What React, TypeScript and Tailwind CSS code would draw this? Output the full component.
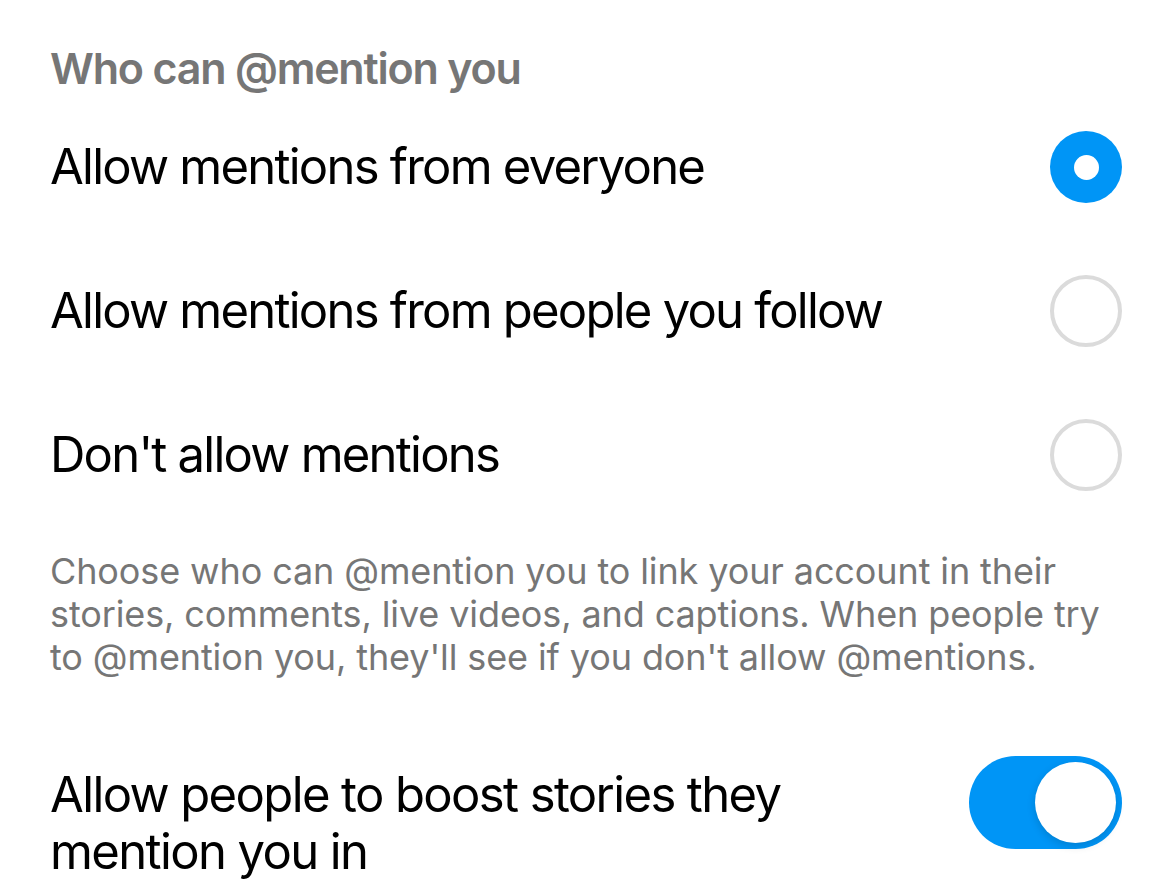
import React, { useState } from "react";

const options = [
  "Allow mentions from everyone",
  "Allow mentions from people you follow",
  "Don't allow mentions",
];

const Radio = ({ checked }: { checked: boolean }) =>
  checked ? (
    <div className="flex h-[72px] w-[72px] items-center justify-center rounded-full bg-[#0095f6]">
      <div className="h-[25px] w-[25px] rounded-full bg-white" />
    </div>
  ) : (
    <div className="h-[72px] w-[72px] rounded-full border-[4px] border-[#dbdbdb]" />
  );

const Toggle = ({ on }: { on: boolean }) => (
  <div
    className={`flex h-[93px] w-[153px] shrink-0 items-center rounded-full px-[6px] ${
      on ? "justify-end bg-[#0095f6]" : "justify-start bg-[#e9e9eb]"
    }`}
  >
    <div className="h-[81px] w-[81px] rounded-full bg-white shadow-[0_3px_8px_rgba(0,0,0,0.15)]" />
  </div>
);

export default function App() {
  const [selected, setSelected] = useState(0);
  const [boost, setBoost] = useState(true);

  return (
    <div className="h-[889px] w-[1170px] overflow-hidden bg-white font-['Inter','Noto_Sans',sans-serif] text-black">
      <div className="pl-[50px] pt-[42px] text-[43px] font-semibold leading-[53px] tracking-[-0.028em] text-[#767676]">
        Who can @mention you
      </div>

      <div>
        {options.map((label, i) => (
          <div
            key={label}
            onClick={() => setSelected(i)}
            className="flex h-[144px] items-center justify-between pl-[50px] pr-[48px]"
          >
            <span className="text-[49px] leading-[60px] tracking-[-0.036em]">{label}</span>
            <Radio checked={selected === i} />
          </div>
        ))}
      </div>

      <p className="mt-[23px] pl-[50px] pr-[40px] text-[36px] leading-[43px] tracking-[-0.003em] text-[#767676]">
        Choose who can @mention you to link your account in their stories, comments, live videos,
        and captions. When people try to @mention you, they'll see if you don't allow @mentions.
      </p>

      <div
        onClick={() => setBoost(!boost)}
        className="mt-[77px] flex items-start justify-between pl-[50px] pr-[48px]"
      >
        <span className="w-[820px] pt-[10px] text-[49px] leading-[57px] tracking-[-0.033em]">
          Allow people to boost stories they mention you in
        </span>
        <Toggle on={boost} />
      </div>
    </div>
  );
}
